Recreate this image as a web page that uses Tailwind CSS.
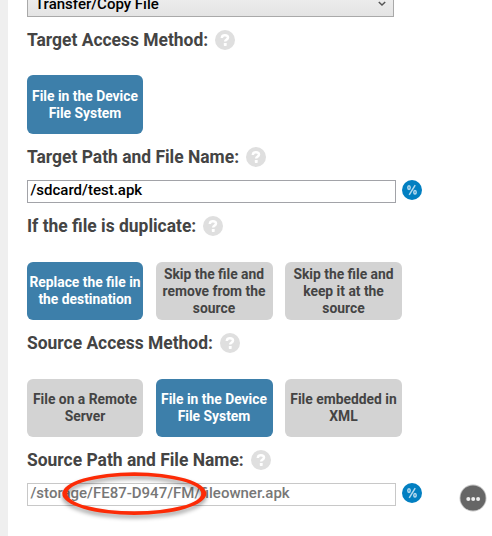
<!DOCTYPE html>
<html lang="en">
<head>
<meta charset="utf-8">
<title>File Transfer</title>
<script src="https://cdn.jsdelivr.net/npm/@tailwindcss/browser@4"></script>
</head>
<body class="bg-white font-['Roboto',sans-serif] w-[492px] h-[536px] overflow-hidden">
<svg class="hidden">
  <symbol id="help" viewBox="0 0 20 20"><circle cx="10" cy="10" r="10" fill="#dfdfdf"/><path d="M6.9 8.1V7.4C7.1 5.9 8.2 5.2 9.9 5.2C11.8 5.2 13 6 13 7.5C13 8.8 12.2 9.2 11.3 9.8C10.5 10.3 10.2 10.6 10.2 11.6" fill="none" stroke="#fff" stroke-width="2.5"/><rect x="8.8" y="13" width="2.9" height="2.9" rx=".6" fill="#fff"/></symbol>
  <symbol id="percent" viewBox="0 0 20 20"><circle cx="10" cy="10" r="10" fill="#027fc1"/><g fill="none" stroke="#b4d9ee" stroke-width="1.5"><ellipse cx="7" cy="7.6" rx="1.2" ry="1.8"/><ellipse cx="13" cy="12.2" rx="1.2" ry="1.8"/><path d="M13.2 5.2 7.2 14.8"/></g></symbol>
</svg>
<div class="relative flex h-[536px]">
  <aside class="w-2 shrink-0 bg-[#efefef]"></aside>
  <main class="ml-[19px] w-[400px] shrink-0">
    <div class="flex h-[17px] w-[367px] items-end justify-between border border-t-0 border-[#a9a9a9] bg-linear-to-b from-[#ececec] to-[#e4e4e4] pl-[7px] pr-[7px]">
      <span class="h-[22px] text-[15px] leading-[20px] font-medium text-black">Transfer/Copy File</span>
      <svg class="mb-[9px] h-[7px] w-[8px] shrink-0" viewBox="0 0 8 7"><path d="M.8 2 4 5 7.2 2" fill="none" stroke="#555" stroke-width="1.5"/></svg>
    </div>

    <div class="mt-[13px] flex h-5 items-center gap-[7px]">
      <h2 class="w-[181px] whitespace-nowrap text-[17.44px] leading-5 font-bold text-[#444]">Target Access Method:</h2>
      <svg class="size-5"><use href="#help"/></svg>
    </div>
    <div class="mt-[25px] flex">
      <button class="h-[59px] w-[116px] rounded-md bg-[#3d7faa] text-center text-[13.85px] leading-[17px] font-bold whitespace-nowrap text-white">File in the Device<br>File System</button>
    </div>

    <div class="mt-[13px] flex h-5 items-center gap-[7px]">
      <h2 class="w-[212px] whitespace-nowrap text-[17.44px] leading-5 font-bold text-[#444]">Target Path and File Name:</h2>
      <svg class="size-5"><use href="#help"/></svg>
    </div>
    <div class="mt-[13px] flex items-start gap-[6px]">
      <div class="h-[23px] w-[369px] border border-[#a2a3a8] pl-[2.5px] text-[15px] leading-[18px] font-medium text-black">/sdcard/test.apk</div>
      <svg class="size-5"><use href="#percent"/></svg>
    </div>

    <div class="mt-[13px] flex h-5 items-center gap-[7px]">
      <h2 class="w-[169px] whitespace-nowrap text-[17.44px] leading-5 font-bold text-[#444]">If the file is duplicate:</h2>
      <svg class="size-5"><use href="#help"/></svg>
    </div>
    <div class="mt-[26px] grid h-[58px] grid-cols-[116px_117px_117px] gap-x-[12.5px] text-center text-[13.85px] leading-[17px] font-bold whitespace-nowrap">
      <button class="rounded-md bg-[#3d7faa] text-white">Replace the file in<br>the destination</button>
      <button class="rounded-md bg-[#d3d3d3] text-[#444]">Skip the file and<br>remove from the<br>source</button>
      <button class="rounded-md bg-[#d3d3d3] text-[#444]">Skip the file and<br>keep it at the<br>source</button>
    </div>

    <div class="mt-[13px] flex h-5 items-center gap-[7px]">
      <h2 class="w-[186px] whitespace-nowrap text-[17.44px] leading-5 font-bold text-[#444]">Source Access Method:</h2>
      <svg class="size-5"><use href="#help"/></svg>
    </div>
    <div class="mt-[26px] grid h-[58px] grid-cols-[116px_117px_117px] gap-x-[12.5px] text-center text-[13.85px] leading-[17px] font-bold whitespace-nowrap">
      <button class="rounded-md bg-[#d3d3d3] text-[#444]">File on a Remote<br>Server</button>
      <button class="rounded-md bg-[#3d7faa] text-white">File in the Device<br>File System</button>
      <button class="rounded-md bg-[#d3d3d3] text-[#444]">File embedded in<br>XML</button>
    </div>

    <div class="mt-[13px] flex h-5 items-center gap-[7px]">
      <h2 class="w-[217px] whitespace-nowrap text-[17.44px] leading-5 font-bold text-[#444]">Source Path and File Name:</h2>
      <svg class="size-5"><use href="#help"/></svg>
    </div>
    <div class="mt-[13px] flex items-start gap-[6px]">
      <div class="h-[23px] w-[369px] border border-[#c8c8c8] pl-[2.5px] text-[15px] leading-[18px] font-medium text-[#777]">/storage/FE87-D947/FM/fileowner.apk</div>
      <svg class="size-5"><use href="#percent"/></svg>
    </div>
  </main>

  <svg class="absolute top-[464px] left-[54px] h-[64px] w-[164px] drop-shadow-[0_3px_2px_rgba(0,0,0,0.4)]" viewBox="54 464 164 64"><path fill-rule="evenodd" fill="#fc2b06" d="M62.3 493.6a72 21.3 0 1 0 144 0a72 21.3 0 1 0 -144 0zM67.3 493.6a67 17.7 0 1 0 134 0a67 17.7 0 1 0 -134 0z"/></svg>
  <svg class="absolute top-[484px] left-[459px] size-7" viewBox="0 0 28 28"><circle cx="14" cy="14" r="13.5" fill="#c4c4c4"/><circle cx="14" cy="14" r="12.6" fill="#666"/><g fill="#eee"><circle cx="9.3" cy="15" r="2"/><circle cx="14.2" cy="15" r="2"/><circle cx="19.1" cy="15" r="2"/></g></svg>
</div>
</body>
</html>
